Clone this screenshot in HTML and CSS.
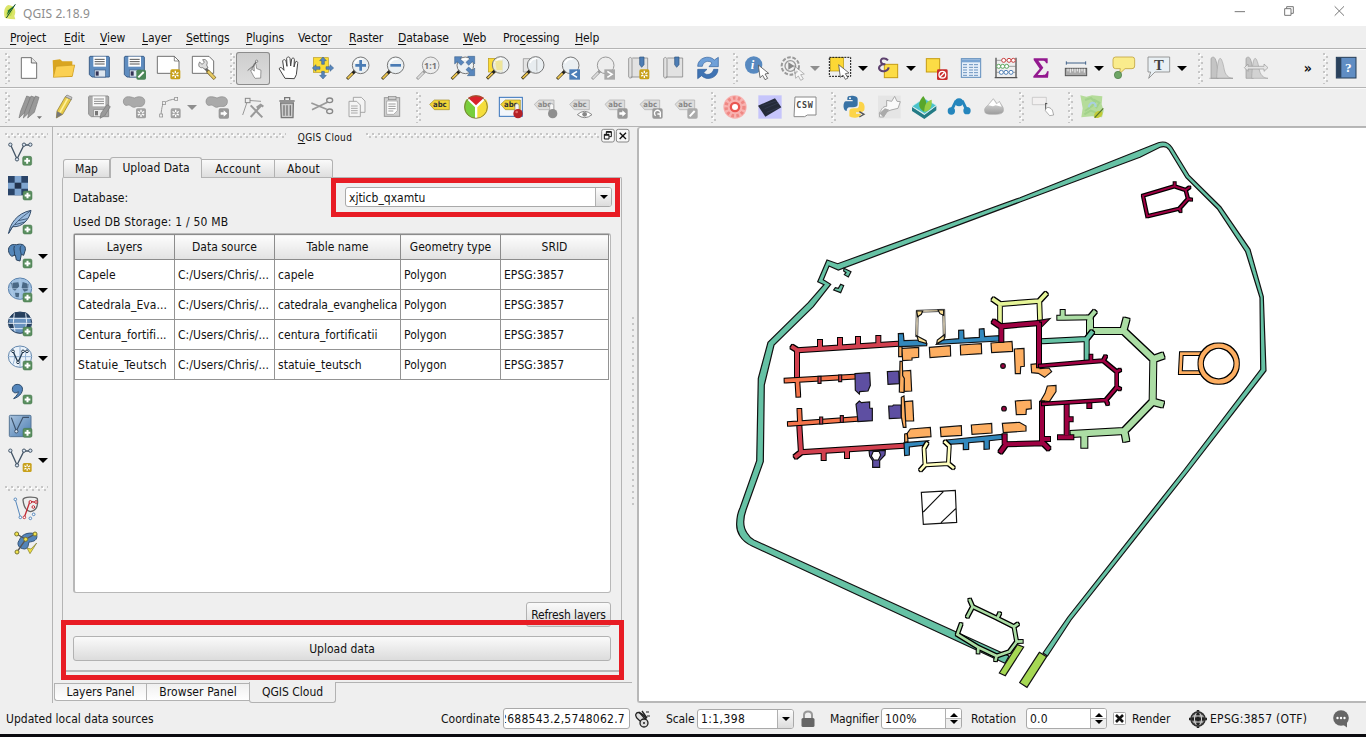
FILE: index.html
```html
<!DOCTYPE html>
<html lang="en">
<head>
<meta charset="utf-8">
<title>QGIS 2.18.9</title>
<link rel="stylesheet" href="styles.css">
</head>
<body>
<svg class="defs" width="0" height="0">
<defs>
<linearGradient id="gSteel" x1="0" y1="0" x2="1" y2="1"><stop offset="0" stop-color="#a9c3de"/><stop offset="1" stop-color="#4b7db2"/></linearGradient>
<linearGradient id="gGray" x1="0" y1="0" x2="0" y2="1"><stop offset="0" stop-color="#e8e8e8"/><stop offset="1" stop-color="#9c9c9c"/></linearGradient>
<g id="plus"><rect width="27" height="27" rx="5" fill="#5b8f60" stroke="#3f7347" stroke-width="1.5"/><path d="M13.500 5V22M5 13.500H22" stroke="#fff" stroke-width="6"/></g>
<g id="star"><rect width="30" height="30" rx="5" fill="#c8a11c"/><path d="M15 4V26M5.500 9.500L24.500 20.500M24.500 9.500L5.500 20.500" stroke="#fff" stroke-width="4"/><circle cx="15" cy="15" r="4" fill="#c8a11c"/></g>
<g id="starG"><rect width="30" height="30" rx="5" fill="#a2a2a2"/><path d="M15 4V26M5.500 9.500L24.500 20.500M24.500 9.500L5.500 20.500" stroke="#fff" stroke-width="4"/><circle cx="15" cy="15" r="4" fill="#a2a2a2"/></g>
<g id="arrowG"><rect width="31" height="31" rx="5" fill="#999"/><path d="M6 12H15V6L26 15.500L15 25V19H6Z" fill="#fff"/></g>
<g id="lens"><path d="M-16 16L-41 41" stroke="#4a4020" stroke-width="9"/><path d="M-22 22L-39 39" stroke="#f0c850" stroke-width="5"/><path d="M-16 16L-24 24" stroke="#222" stroke-width="8"/><circle r="25" fill="#e9eef2" fill-opacity=".85" stroke="#777" stroke-width="3"/><path d="M-17 -6A18 18 0 0 1 6 -18" fill="none" stroke="#fff" stroke-width="5"/></g>
<g id="lensG"><path d="M-16 16L-41 41" stroke="#999" stroke-width="9"/><path d="M-22 22L-39 39" stroke="#ddd" stroke-width="5"/><circle r="25" fill="#ececec" fill-opacity=".85" stroke="#999" stroke-width="3"/></g>
<g id="tag"><path d="M1 15L15 2H60V31H15Z" fill="#f0d437" stroke="#a08c28" stroke-width="2"/><text x="11" y="24" class="abc">abc</text></g>
<g id="tagG"><path d="M1 15L15 2H60V31H15Z" fill="#ddd" stroke="#aaa" stroke-width="2"/><text x="11" y="24" class="abc dim">abc</text></g>
<g id="disk"><path d="M2 0H58L60 3V62H8L0 55V2Z" fill="#5f8dc0" stroke="#3d5f8a" stroke-width="3"/><rect x="12" y="1" width="38" height="30" fill="#fff"/><path d="M16 9H46M16 16H46M16 23H46" stroke="#555" stroke-width="3"/><rect x="15" y="41" width="34" height="21" fill="#dde6ef" stroke="#3d5f8a" stroke-width="2"/><rect x="19" y="45" width="9" height="13" fill="#335"/></g>
<g id="cursor"><path d="M0 0L31 25L20 27L28 40L20 44L13 31L5 38Z" fill="#fff" stroke="#555" stroke-width="2.500"/></g>
<g id="vec"><path d="M8 8L27 50L48 8H66" fill="none" stroke="#456" stroke-width="4"/><g fill="#dbe6f2" stroke="#456" stroke-width="3"><circle cx="7" cy="7" r="5"/><circle cx="27" cy="51" r="5"/><circle cx="48" cy="7" r="5"/><circle cx="67" cy="7" r="5"/></g></g>
</defs>
</svg>

<header class="titlebar">
<svg class="logo" viewBox="9 9 42 51"><path d="M25 15C12 20 10 40 15 54L30 57L46 58L43 48C50 35 45 16 25 15Z" fill="#dce56a"/><path d="M20 46C17 34 22 26 36 22L38 35L33 48Z" fill="#c3de4d"/><path d="M47 13L20 46L25 31Z" fill="#126b39"/><path d="M46 13L19 54" stroke="#114d2b" stroke-width="3"/></svg>
<span class="apptitle">QGIS 2.18.9</span>
<svg class="winbtns" viewBox="636 0 414 78"><g fill="none" stroke="#777" stroke-width="3"><path d="M656 35H687M956 19L984 47M984 19L956 47"/><path d="M806 26H825V46H806ZM812 26V20H832V40H825"/></g></svg>
</header>
<nav class="menubar"><span><u>P</u>roject</span><span><u>E</u>dit</span><span><u>V</u>iew</span><span><u>L</u>ayer</span><span><u>S</u>ettings</span><span><u>P</u>lugins</span><span>Vect<u>o</u>r</span><span><u>R</u>aster</span><span><u>D</u>atabase</span><span><u>W</u>eb</span><span>Pro<u>c</u>essing</span><span><u>H</u>elp</span></nav>

<div class="toolbar">
<i class="grip g11"></i>
<svg class="t" viewBox="33 147 105 114"><path d="M64 173H94L110 189V235H64Z" fill="#fff" stroke="#555" stroke-width="2.500"/><path d="M94 173V189H110" fill="#e8e8e8" stroke="#555" stroke-width="2.500"/></svg>
<svg class="t" viewBox="138 147 105 114"><path d="M160 230L158 181L180 178L187 184H217V195L224 196L216 231Z" fill="#d9a520"/><path d="M160 232L168 199L224 195L217 229Z" fill="#fbd052" stroke="#c8991e" stroke-width="2"/></svg>
<svg class="t" viewBox="243 147 105 114"><use href="#disk" x="268" y="169"/></svg>
<svg class="t" viewBox="348 147 105 114"><use href="#disk" x="373" y="169"/><rect x="409" y="209" width="29" height="30" rx="5" fill="#4b8657"/><path d="M415 232L431 216" stroke="#fff" stroke-width="6"/></svg>
<svg class="t" viewBox="453 147 105 114"><path d="M472 169H523L537 183V220H472Z" fill="#fff" stroke="#555" stroke-width="2.500"/><path d="M523 169V183H537" fill="none" stroke="#555" stroke-width="2"/><use href="#star" x="511" y="208"/></svg>
<svg class="t" viewBox="558 147 105 114"><path d="M577 169H627L641 183V220H577Z" fill="#fff" stroke="#555" stroke-width="2.500"/><path d="M614 202L632 224" stroke="#666" stroke-width="8"/><path d="M622 212L645 236" stroke="#766225" stroke-width="11"/><path d="M624 214L644 235" stroke="#e7ca64" stroke-width="7"/><path d="M599 186L606 193L613 187L608 179C618 176 625 185 620 195L624 204L615 208L608 203C597 205 593 195 599 186Z" fill="#ddd" stroke="#555" stroke-width="2"/></svg>
<i class="grip g15"></i>
<svg class="t on" viewBox="708 147 105 114"><path d="M764 233L757 220L752 211L759 208L765 213L764 190C764 184 770 184 771 190L773 204L788 210L787 237L768 238Z" fill="#fff" stroke="#777" stroke-width="2.500"/><path d="M742 211L762 194L773 178M755 207L771 184" fill="none" stroke="#666" stroke-width="3"/><circle cx="773" cy="179" r="4" fill="#eee" stroke="#555" stroke-width="2"/></svg>
<svg class="t" viewBox="813 147 105 114"><path d="M855 235L838 207C838 200 845 201 852 211L848 183C850 177 856 178 858 183L861 199L860 175C862 169 869 170 870 175L872 198L875 177C878 172 884 174 883 180L882 201L886 186C889 182 895 185 893 191L889 224L883 236Z" fill="#fff" stroke="#444" stroke-width="3"/></svg>
<svg class="t" viewBox="918 147 105 114"><rect x="940" y="173" width="45" height="44" fill="#fbdc35" stroke="#b99a1d" stroke-width="2"/><g fill="#5786bd" stroke="#315681" stroke-width="1.500"><path d="M969 171L979 182H973V193H965V182H959ZM969 237L979 226H973V214H965V226H959ZM937 204L948 194V200H960V208H948V214ZM1001 204L990 194V200H978V208H990V214Z"/></g></svg>
<svg class="t" viewBox="3 147 105 114"><use href="#lens" x="62" y="196"/><path d="M62 180V212M46 196H78" stroke="#4a7cb5" stroke-width="8"/></svg>
<svg class="t" viewBox="108 147 105 114"><use href="#lens" x="167" y="196"/><path d="M151 196H183" stroke="#4a7cb5" stroke-width="8"/></svg>
<svg class="t" viewBox="213 147 105 114"><use href="#lensG" x="272" y="196"/><text x="252" y="206" class="one">1:1</text></svg>
<svg class="t" viewBox="318 147 105 114"><use href="#lens" x="376" y="196"/><g fill="#5786bd" stroke="#315681" stroke-width="1.500"><path d="M344 170H366L360 177L372 187L363 196L352 185L344 192ZM404 169V192L397 185L386 196L378 187L389 177L383 169ZM404 227V204L397 211L386 201L378 209L389 219L382 227Z"/></g></svg>
<svg class="t" viewBox="423 147 105 114"><rect x="445" y="175" width="42" height="41" fill="#fbdc35" stroke="#b99a1d" stroke-width="2"/><use href="#lens" x="482" y="195"/><path d="M465 182H487V210H470Z" fill="#efe48c" opacity=".8"/></svg>
<svg class="t" viewBox="528 147 105 114"><path d="M550 176H592V216H550Z" fill="#e4e4e4" stroke="#888" stroke-width="2"/><use href="#lens" x="587" y="195"/><path d="M590 177V212" stroke="#aaa" stroke-width="2"/></svg>
<svg class="t" viewBox="633 147 105 114"><use href="#lens" x="692" y="196"/><rect x="688" y="208" width="32" height="31" fill="#4d7eb8"/><path d="M711 214L697 223L711 232" fill="none" stroke="#fff" stroke-width="5"/></svg>
<svg class="t" viewBox="738 147 105 114"><use href="#lensG" x="797" y="196"/><rect x="793" y="208" width="32" height="31" fill="#aaa"/><path d="M802 214L816 223L802 232" fill="none" stroke="#fff" stroke-width="5"/></svg>
<svg class="t" viewBox="843 147 105 114"><path d="M866 176C870 169 877 173 876 180V232C872 236 865 234 866 228ZM877 174H923V231H872" fill="#e2e2e2" stroke="#8a8a8a" stroke-width="2.500"/><path d="M899 171H912V194L905 202L899 194Z" fill="#4d7db4" stroke="#2f547f" stroke-width="2"/><use href="#star" x="898" y="208"/></svg>
<svg class="t" viewBox="948 147 105 114"><path d="M971 176C975 169 982 173 981 180V232C977 236 970 234 971 228ZM982 174H1028V231H977" fill="#e2e2e2" stroke="#8a8a8a" stroke-width="2.500"/><path d="M1004 171H1017V194L1010 202L1004 194Z" fill="#4d7db4" stroke="#2f547f" stroke-width="2"/></svg>
<svg class="t" viewBox="33 12 105 114"><path d="M53 64C53 38 88 28 103 45L115 37V65H87L96 54C86 44 69 50 67 64Z" fill="#6fa0d8" stroke="#315f9c" stroke-width="2"/><path d="M114 73C114 99 80 109 65 92L53 101V73H81L71 83C81 94 98 87 101 73Z" fill="#3f73b3" stroke="#315f9c" stroke-width="2"/></svg>
<i class="grip g13"></i>
<svg class="t" viewBox="177 12 105 114"><circle cx="221" cy="60" r="26" fill="#5789c0"/><text x="212" y="73" class="info">i</text><use href="#cursor" x="235" y="60"/></svg>
<svg class="t" viewBox="282 12 105 114"><g fill="none" stroke="#999"><circle cx="331" cy="63" r="26" stroke-width="6" stroke-dasharray="11 5"/><circle cx="331" cy="63" r="16" stroke-width="4"/></g><path d="M325 52L343 63L325 74Z" fill="#888"/><use href="#cursor" x="342" y="62" opacity=".45"/></svg>
<i class="dd dim"></i>
<svg class="t" viewBox="426 12 105 114"><rect x="451" y="38" width="40" height="40" fill="#fcd835" stroke="#b39510" stroke-width="2"/><rect x="448" y="37" width="64" height="57" fill="none" stroke="#111" stroke-width="3" stroke-dasharray="6 3"/><use href="#cursor" x="476" y="59"/></svg>
<i class="dd"></i>
<svg class="t" viewBox="570 12 105 114"><rect x="613" y="58" width="40" height="40" fill="#fcdc45" stroke="#c69c13" stroke-width="3"/><path d="M624 46C616 36 599 40 603 51C604 57 612 58 616 58C600 57 593 68 600 75C608 83 625 78 626 67" fill="none" stroke="#5d416e" stroke-width="6"/></svg>
<i class="dd"></i>
<svg class="t" viewBox="714 12 105 114"><rect x="739" y="41" width="40" height="40" fill="#fcdc45" stroke="#c69c13" stroke-width="3"/><rect x="771" y="73" width="32" height="32" rx="4" fill="#c92c2c"/><circle cx="787" cy="89" r="10" fill="none" stroke="#fff" stroke-width="4"/><path d="M780 96L794 82" stroke="#fff" stroke-width="4"/></svg>
<svg class="t" viewBox="819 12 105 114"><rect x="844" y="41" width="58" height="56" fill="#e6eff9" stroke="#5f8cbc" stroke-width="3"/><rect x="846" y="43" width="54" height="9" fill="#79a4d2"/><path d="M849 59H862M849 67H862M849 75H862M849 83H862M849 91H862M867 59H897M867 67H897M867 75H897M867 83H897M867 91H897" stroke="#6b93bf" stroke-width="3" stroke-dasharray="12 3"/></svg>
<svg class="t" viewBox="924 12 105 114"><path d="M948 38V98M1008 38V98M944 98H1012" stroke="#555" stroke-width="4"/><path d="M948 46H1008M948 64H1008M948 82H1008" stroke="#777" stroke-width="2"/><g fill="#fff" stroke-width="3"><g stroke="#c94040"><circle cx="971" cy="46" r="6"/><circle cx="987" cy="46" r="6"/><circle cx="1000" cy="46" r="6"/></g><g stroke="#5ca65c"><circle cx="956" cy="64" r="6"/><circle cx="968" cy="64" r="6"/><circle cx="980" cy="64" r="6"/></g><g stroke="#4f81b9"><circle cx="964" cy="82" r="6"/><circle cx="978" cy="82" r="6"/><circle cx="993" cy="82" r="6"/></g></g></svg>
<svg class="t" viewBox="21 147 105 114"><path d="M53 175H95V190H90C89 183 85 182 78 182H67L82 203L65 225H80C89 225 91 222 93 214H98L96 233H52V229L71 206L53 180Z" fill="#93198f"/></svg>
<svg class="t" viewBox="126 147 105 114"><path d="M151 189H209M151 184V194M209 184V194" stroke="#3f6188" stroke-width="3"/><rect x="148" y="205" width="64" height="22" fill="#aaa" stroke="#555" stroke-width="3"/><path d="M156 206V214M163 206V218M170 206V214M177 206V218M184 206V214M191 206V218M198 206V214M205 206V218" stroke="#fff" stroke-width="2.500"/></svg>
<i class="dd"></i>
<svg class="t" viewBox="270 147 105 114"><path d="M299 171H349Q356 171 356 179V198Q356 206 348 206H327L310 222L313 206H299Q291 206 291 198V179Q291 171 299 171Z" fill="#faec8c" stroke="#c2a43e" stroke-width="2.500"/><circle cx="306" cy="225" r="11" fill="#6ea565" stroke="#4a7846" stroke-width="2"/></svg>
<svg class="t" viewBox="375 147 105 114"><path d="M396 171H461V216H417L398 235L404 216H396Z" fill="#e9f0f4" stroke="#888" stroke-width="2.500"/><text x="414" y="209" class="serifT">T</text></svg>
<i class="dd"></i>
<i class="grip g15"></i>
<svg class="t" viewBox="564 147 105 114"><path d="M585 235V175C598 162 604 185 607 235Z" fill="#c4c4c4" stroke="#999" stroke-width="2"/><path d="M602 235C605 160 616 160 625 210C630 231 642 234 651 235Z" fill="#d2d2d2" stroke="#a5a5a5" stroke-width="2"/><path d="M580 235H651" stroke="#999" stroke-width="2"/></svg>
<svg class="t" viewBox="669 147 105 114"><path d="M690 235V175C703 162 709 185 712 235Z" fill="#c4c4c4" stroke="#999" stroke-width="2"/><path d="M707 235C710 160 721 160 730 210C735 231 747 234 756 235Z" fill="#d2d2d2" stroke="#a5a5a5" stroke-width="2"/><path d="M685 203L696 192V199H744V192L756 203L744 214V207H696V214Z" fill="#e4e4e4" stroke="#999" stroke-width="2"/></svg>
<span class="more">»</span>
<i class="grip g17"></i>
<svg class="t" viewBox="939 147 105 114"><rect x="961" y="172" width="59" height="62" fill="#608dc3" stroke="#263c55" stroke-width="3"/><rect x="962" y="173" width="14" height="60" fill="#2a415b"/><text x="987" y="217" class="q">?</text></svg>
</div>

<div class="toolbar">
<i class="grip g11"></i>
<svg class="t" viewBox="33 264 105 114"><g fill="#999" stroke="#777" stroke-width="2"><path d="M57 354L62 333L80 288L91 292L77 335Z"/><path d="M70 354L75 333L93 288L104 292L90 335Z"/><path d="M83 354L88 333L106 288L117 292L103 337Z"/></g><path d="M111 349H126L118 357Z" fill="#777"/></svg>
<svg class="t" viewBox="138 264 105 114"><path d="M169 354L171 333L196 290L214 298L188 343Z" fill="#e8cb47" stroke="#86712a" stroke-width="2"/><path d="M180 337L203 296" stroke="#fff09a" stroke-width="5"/><path d="M196 290L201 285L216 292L214 299Z" fill="#c8c8c8" stroke="#777" stroke-width="2"/><path d="M169 354L171 334L188 343Z" fill="#777"/></svg>
<svg class="t" viewBox="243 264 105 114"><g class="mono"><use href="#disk" x="266" y="288"/></g><path d="M300 355L303 340L321 314L331 320L314 347Z" fill="#999" stroke="#777" stroke-width="2"/></svg>
<svg class="t" viewBox="348 264 105 114"><path d="M370 306C370 287 387 288 403 294C424 284 439 295 433 311C427 325 414 316 406 321C396 326 392 312 382 316C375 318 371 312 370 306Z" fill="#aaa" stroke="#8a8a8a" stroke-width="2"/><use href="#starG" x="408" y="325"/></svg>
<svg class="t" viewBox="453 264 105 114"><path d="M483 345C485 320 489 308 493 309C500 302 514 298 528 297" fill="none" stroke="#999" stroke-width="3"/><g fill="#eee" stroke="#888" stroke-width="2"><rect x="479" y="342" width="9" height="9"/><rect x="487" y="305" width="9" height="9"/><rect x="524" y="292" width="9" height="9"/></g><use href="#starG" x="512" y="325"/></svg>
<i class="dd dim"></i>
<svg class="t" viewBox="597 264 105 114"><path d="M618 306C618 287 635 288 651 294C672 284 687 295 681 311C675 325 662 316 654 321C644 326 640 312 630 316C623 318 619 312 618 306Z" fill="#aaa" stroke="#8a8a8a" stroke-width="2"/><use href="#arrowG" x="656" y="325"/></svg>
<svg class="t" viewBox="702 264 105 114"><path d="M728 345L743 301L783 304" fill="none" stroke="#999" stroke-width="3"/><rect x="736" y="295" width="14" height="13" fill="#eee" stroke="#888" stroke-width="3"/><path d="M752 316L787 352M785 315L752 351M770 323L782 314L790 320" fill="none" stroke="#999" stroke-width="6"/></svg>
<svg class="t" viewBox="807 264 105 114"><path d="M842 309H880L879 353H844Z" fill="#ccc" stroke="#777" stroke-width="4"/><path d="M852 316V347M861 316V347M871 316V347M838 303H884M854 300V293H869V300" fill="none" stroke="#777" stroke-width="4"/></svg>
<svg class="t" viewBox="912 264 105 114"><path d="M934 309L980 328M936 329L982 307" stroke="#999" stroke-width="5"/><g fill="none" stroke="#888" stroke-width="4"><ellipse cx="989" cy="301" rx="9" ry="7"/><ellipse cx="989" cy="334" rx="9" ry="7"/></g></svg>
<svg class="t" viewBox="-3 264 105 114"><g fill="#f4f4f4" stroke="#999" stroke-width="2.500"><path d="M40 292H64L75 303V337H40Z"/><path d="M27 304H50L61 315V350H27Z"/></g><path d="M33 318H53M33 325H53M33 332H53M33 339H53" stroke="#aaa" stroke-width="3"/></svg>
<svg class="t" viewBox="102 264 105 114"><rect x="133" y="293" width="46" height="56" fill="#d0d0d0" stroke="#999" stroke-width="3"/><path d="M140 303H172V332L161 343H140Z" fill="#fff" stroke="#999" stroke-width="2"/><rect x="145" y="289" width="23" height="10" fill="#ccc" stroke="#888" stroke-width="2"/><path d="M145 312H167M145 319H167M145 326H167M145 333H160" stroke="#999" stroke-width="3"/></svg>
<i class="grip g13"></i>
<svg class="t" viewBox="246 264 105 114"><use href="#tag" x="268" y="298"/></svg>
<svg class="t" viewBox="351 264 105 114"><circle cx="408" cy="321" r="35" fill="#fff"/><path d="M408 316L384 293Q408 279 432 293Z" fill="#d9232a"/><path d="M405 322L380 297C363 321 375 352 405 355Z" fill="#79ce3c"/><path d="M412 322L437 297C454 321 440 352 412 355Z" fill="#f5de3b"/><circle cx="408" cy="321" r="34" fill="none" stroke="#7c7034" stroke-width="2.500"/></svg>
<svg class="t" viewBox="456 264 105 114"><rect x="478" y="292" width="69" height="57" fill="#f2f6fb" stroke="#3674bb" stroke-width="3"/><use href="#tag" x="481" y="298"/><rect x="525" y="311" width="12" height="25" rx="6" fill="#f7f7f7" stroke="#888" stroke-width="2"/><circle cx="534" cy="341" r="14" fill="#b52026"/><circle cx="530" cy="336" r="4" fill="#dc6969"/></svg>
<svg class="t" viewBox="561 264 105 114"><use href="#tagG" x="582" y="298"/><rect x="629" y="311" width="12" height="25" rx="6" fill="#f7f7f7" stroke="#999" stroke-width="2"/><circle cx="638" cy="341" r="14" fill="#8e8e8e"/></svg>
<svg class="t" viewBox="666 264 105 114"><use href="#tagG" x="688" y="298"/><path d="M712 344Q733 324 756 344Q734 362 712 344Z" fill="#fff" stroke="#888" stroke-width="3"/><circle cx="734" cy="343" r="7" fill="#888"/></svg>
<svg class="t" viewBox="771 264 105 114"><use href="#tagG" x="794" y="298"/><use href="#arrowG" x="832" y="325"/></svg>
<svg class="t" viewBox="876 264 105 114"><use href="#tagG" x="899" y="298"/><rect x="937" y="325" width="31" height="31" rx="5" fill="#999"/><path d="M947 347A9 9 0 1 1 959 346M961 352V342H952" fill="none" stroke="#fff" stroke-width="4"/></svg>
<svg class="t" viewBox="981 264 105 114"><use href="#tagG" x="1004" y="298"/><rect x="1042" y="325" width="31" height="31" rx="5" fill="#aaa"/><path d="M1049 349L1064 333" stroke="#fff" stroke-width="6"/></svg>
<i class="grip g15"></i>
<svg class="t" viewBox="111 129 105 114"><circle cx="165" cy="186" r="35" fill="#f8b2b0"/><circle cx="165" cy="186" r="27" fill="none" stroke="#ef8884" stroke-width="10" stroke-dasharray="8 7"/><circle cx="165" cy="186" r="16" fill="#ea5550"/><circle cx="165" cy="186" r="9" fill="#fff"/></svg>
<svg class="t" viewBox="216 129 105 114"><rect x="235" y="151" width="70" height="70" fill="#c6c5fb"/><path d="M234 182L285 160L304 187L256 215Z" fill="#252b39"/><path d="M247 182L289 168M254 191L295 174M260 202L298 187" stroke="#364056" stroke-width="2"/></svg>
<svg class="t" viewBox="321 129 105 114"><path d="M345 156H408V210H382L374 215H342Z" fill="#fff" stroke="#888" stroke-width="3"/><text x="349" y="190" class="csw">CSW</text></svg>
<i class="grip g15"></i>
<svg class="t" viewBox="471 129 105 114"><path d="M505 154C516 150 533 153 533 162V178C533 185 528 187 519 187H509C502 187 500 193 500 198C488 199 488 171 497 169H518V165H502C502 159 502 156 505 154Z" fill="#3872a5"/><circle cx="510" cy="160" r="3" fill="#fff"/><path d="M537 171C551 168 556 181 553 195C550 202 540 202 528 202V206H543C542 220 516 221 508 214V198C508 192 515 190 522 190H529C537 190 538 182 537 171Z" fill="#fcd449"/><path d="M538 200L552 208L538 216" fill="none" stroke="#555" stroke-width="4"/></svg>
<svg class="t" viewBox="576 129 105 114"><rect x="594" y="152" width="68" height="68" fill="#e5e5e5"/><path d="M598 204C605 194 607 184 620 184L620 166L635 169L644 154L651 169L661 170L654 190L633 195L620 200L611 216H599Z" fill="#fafafa" stroke="#aaa" stroke-width="3"/><path d="M598 205L615 190L628 194L610 217Z" fill="#aaa"/></svg>
<svg class="t" viewBox="681 129 105 114"><path d="M696 186L733 210L769 183V196L733 222L696 198Z" fill="#237b85"/><path d="M696 184L732 160L769 181L734 207Z" fill="#4ac2cb" stroke="#d9f3f4" stroke-width="2"/><path d="M732 200C710 187 716 169 730 153C741 168 742 185 732 200Z" fill="#58a62b"/><path d="M733 201C732 175 743 168 755 164C757 187 749 198 733 201Z" fill="#97cd45"/></svg>
<svg class="t" viewBox="786 129 105 114"><path d="M814 197L827 170H848L861 197" fill="none" stroke="#2586bd" stroke-width="9"/><g fill="#2586bd"><circle cx="814" cy="198" r="11"/><circle cx="837" cy="172" r="12"/><circle cx="861" cy="197" r="11"/></g></svg>
<svg class="t" viewBox="891 129 105 114"><path d="M915 201C911 190 918 186 925 179L940 161L951 176L958 169L969 187C974 205 965 208 940 208C920 208 915 205 915 201Z" fill="url(#gGray)" stroke="#aaa" stroke-width="2"/><path d="M925 181L940 164L949 178L958 172L965 185L947 181L939 184Z" fill="#fff"/></svg>
<i class="grip g13"></i>
<svg class="t" viewBox="27 264 105 114"><path d="M49 292H91V314H49Z" fill="#f2f0f0" stroke="#bbb" stroke-width="2"/><path d="M89 309V330M88 310L94 311" stroke="#555" stroke-width="3"/><path d="M88 332C89 320 100 319 109 330L113 345L101 347Z" fill="#fff" stroke="#888" stroke-width="2"/></svg>
<i class="grip g14"></i>
<svg class="t" viewBox="174 264 105 114"><path d="M193 286L211 290L228 286L259 289L257 313L263 332L258 352L228 349L196 352L200 325Z" fill="#b5dc9a"/><path d="M207 300L225 294L237 306L228 318L207 333M232 298L250 308L240 325M205 343L224 332L240 338" stroke="#a2d28b" stroke-width="6" fill="none"/><path d="M218 322C222 304 240 304 239 321" fill="none" stroke="#a9cfe0" stroke-width="6"/><path d="M235 353C231 336 246 329 259 335C261 350 249 356 235 353Z" fill="#c3cb38"/><path d="M236 353L262 325" stroke="#55772b" stroke-width="4"/></svg>
</div>

<main class="work">
<aside class="sidebar">
<i class="hgrip"></i>
<div class="tool"><svg class="v" viewBox="9 39 105 102"><use href="#vec" x="24" y="55"/><use href="#plus" x="68" y="97"/></svg></div>
<div class="tool"><svg class="v" viewBox="9 141 105 102"><rect x="24" y="156" width="60" height="58" fill="#2a4468"/><path d="M44 156h20v20h20v18h-20v20h-20v-20h-20v-18h20z" fill="#7fa5d0"/><rect x="44" y="176" width="20" height="18" fill="#22334e"/><use href="#plus" x="69" y="201"/></svg></div>
<div class="tool"><svg class="v" viewBox="9 243 105 102"><path d="M26 328C30 300 50 268 93 259C89 286 66 311 38 308Z" fill="#9bbce0" stroke="#354e6c" stroke-width="3"/><path d="M25 329C40 300 60 284 91 261M45 302L75 294M55 290L82 284" fill="none" stroke="#354e6c" stroke-width="2.500"/><use href="#plus" x="69" y="303"/></svg></div>
<div class="tool"><svg class="v" viewBox="9 345 105 102"><path d="M31 365C38 358 48 365 54 361C65 359 78 363 76 378L71 394L64 391L60 411L49 408L46 393L35 397C23 387 23 372 31 365Z" fill="#5486b9" stroke="#29425e" stroke-width="3"/><path d="M43 366C39 378 46 385 43 394M64 365C56 372 64 386 63 391" fill="none" stroke="#29425e" stroke-width="3"/><use href="#plus" x="69" y="405"/></svg><i class="dd"></i></div>
<div class="tool"><svg class="v" viewBox="9 447 105 102"><ellipse cx="60" cy="494" rx="35" ry="32" fill="#9fc0e1" stroke="#5b82ac" stroke-width="3"/><path d="M33 477L55 475L58 487L45 500L36 494ZM68 474L86 480L85 499L73 503L65 491ZM45 506L58 507L56 520L47 519Z" fill="#4a6885"/><path d="M25 494H95M60 463V526M40 468Q30 494 40 520M80 468Q90 494 80 520" fill="none" stroke="#b5cfe8" stroke-width="2"/><use href="#plus" x="69" y="507"/></svg><i class="dd"></i></div>
<div class="tool"><svg class="v" viewBox="9 549 105 102"><ellipse cx="60" cy="596" rx="35" ry="32" fill="#6992bf" stroke="#263f5d" stroke-width="3"/><path d="M30 581Q36 569 45 565H76Q88 570 91 581ZM25 596H43V613H31ZM78 596H95L89 613H78Z" fill="#263f5d"/><path d="M26 583H94M25 598H95M31 614H90M43 568Q36 595 45 622M77 568Q84 595 75 622" fill="none" stroke="#e3edf8" stroke-width="3"/><use href="#plus" x="69" y="609"/></svg></div>
<div class="tool"><svg class="v" viewBox="9 651 105 102"><ellipse cx="60" cy="698" rx="35" ry="32" fill="#eaf2fa" stroke="#6387ad" stroke-width="3"/><path d="M25 698H95M60 667V730M38 675Q49 696 39 721M82 675Q71 696 81 721" fill="none" stroke="#94b2d3" stroke-width="3"/><path d="M39 682L54 715L69 682H81" fill="none" stroke="#243b50" stroke-width="4"/><g fill="#fff" stroke="#243b50" stroke-width="3"><circle cx="39" cy="682" r="4"/><circle cx="54" cy="715" r="4"/><circle cx="69" cy="682" r="4"/><circle cx="81" cy="682" r="4"/></g><use href="#plus" x="69" y="711"/></svg><i class="dd"></i></div>
<div class="tool"><svg class="v" viewBox="9 -42 105 102"><path d="M37 2C36 -14 55 -19 65 -8C73 5 61 23 41 29C49 20 55 15 55 8C46 15 38 11 37 2Z" fill="#5486bc" stroke="#2d4b6c" stroke-width="3"/><use href="#plus" x="69" y="18"/></svg></div>
<div class="tool"><svg class="v" viewBox="9 60 105 102"><rect x="28" y="79" width="65" height="64" rx="3" fill="url(#gSteel)" stroke="#567595" stroke-width="3"/><path d="M34 86L49 126L69 85H87" fill="none" stroke="#3d526b" stroke-width="3.500"/><circle cx="49" cy="127" r="5" fill="#dce8f3" stroke="#3d526b" stroke-width="3"/><use href="#plus" x="69" y="118"/></svg></div>
<div class="tool"><svg class="v" viewBox="9 162 105 102"><use href="#vec" x="24" y="178"/><g transform="translate(68 222) scale(.9)"><use href="#star"/></g></svg><i class="dd"></i></div>
<i class="hgrip second"></i>
<div class="tool shifted"><svg class="v" viewBox="27 303 105 102"><path d="M46 329L61 381" stroke="#5587bc" stroke-width="3"/><path d="M69 330C68 318 108 320 112 326C115 348 110 362 91 365C77 362 71 350 69 330Z" fill="#eee" stroke="#666" stroke-width="4"/><path d="M73 382L90 334L107 337" fill="none" stroke="#c22d38" stroke-width="4"/><g fill="#fff" stroke="#c22d38" stroke-width="3"><circle cx="73" cy="382" r="4"/><circle cx="91" cy="336" r="4"/><circle cx="100" cy="351" r="4"/><circle cx="108" cy="336" r="4"/></g><g fill="#fff" stroke="#5587bc" stroke-width="3"><circle cx="46" cy="328" r="4"/><circle cx="61" cy="382" r="4"/><circle cx="91" cy="385" r="4"/><circle cx="101" cy="373" r="4"/></g></svg></div>
<div class="tool shifted"><svg class="v" viewBox="27 405 105 102"><path d="M57 452C67 427 93 426 110 433C114 451 101 455 87 456C84 464 87 474 74 477C57 476 49 463 57 452Z" fill="#5384b9" stroke="#35557a" stroke-width="3"/><path d="M50 432L77 448L105 432M77 448L51 486" fill="none" stroke="#555" stroke-width="4"/><g fill="#f1e24c" stroke="#777534" stroke-width="3"><circle cx="50" cy="432" r="6"/><circle cx="105" cy="432" r="6"/><circle cx="77" cy="448" r="6"/><circle cx="51" cy="486" r="6"/></g><path d="M81 474L93 477L110 459L90 491Z" fill="#f4e23d" stroke="#777534" stroke-width="2"/></svg></div>
</aside>

<section class="dock">
<div class="docktitle"><i class="hgrip wide1"></i><span><u>Q</u>GIS Cloud</span><i class="hgrip wide2"></i>
<svg class="dockbtns" viewBox="843 10 87 45"><g fill="#f8f8f8" stroke="#888" stroke-width="3"><rect x="845" y="14" width="38" height="38" rx="6"/><rect x="889" y="14" width="38" height="38" rx="6"/></g><path d="M859 28V21H874V36H868M853 29H867V43H853Z" fill="none" stroke="#111" stroke-width="3"/><path d="M859 22H874M853 31H867M899 24L918 43M918 24L899 43" stroke="#111" stroke-width="4"/></svg></div>
<div class="tabs"><span class="tab map-t">Map</span><span class="tab active">Upload Data</span><span class="tab acc-t">Account</span><span class="tab about-t">About</span></div>
<div class="page">
<div class="dbrow"><span>Database:</span><div class="combo db"><span>xjticb_qxamtu</span><b><i class="dd"></i></b></div></div>
<div class="storage">Used DB Storage: 1 / 50 MB</div>
<div class="tableframe"><table>
<colgroup><col class="c1"><col class="c1"><col class="c3"><col class="c1"><col class="c5"></colgroup>
<tr><th>Layers</th><th>Data source</th><th>Table name</th><th>Geometry type</th><th>SRID</th></tr>
<tr><td>Capele</td><td>C:/Users/Chris/...</td><td>capele</td><td>Polygon</td><td>EPSG:3857</td></tr>
<tr><td>Catedrala_Eva...</td><td>C:/Users/Chris/...</td><td class="tight">catedrala_evanghelica</td><td>Polygon</td><td>EPSG:3857</td></tr>
<tr><td>Centura_fortifi...</td><td>C:/Users/Chris/...</td><td>centura_fortificatii</td><td>Polygon</td><td>EPSG:3857</td></tr>
<tr><td class="loose">Statuie_Teutsch</td><td>C:/Users/Chris/...</td><td>statuie_teutsch</td><td>Polygon</td><td>EPSG:3857</td></tr>
</table></div>
<button class="btn refresh">Refresh layers</button>
<button class="btn upload">Upload data</button>
</div>
<div class="btabs"><span class="bt one-t">Layers Panel</span><span class="bt two-t">Browser Panel</span><span class="bt cur">QGIS Cloud</span><i class="rule"></i></div>
<div class="mark mark-db"></div>
<div class="mark mark-up"></div>
</section>
<div class="splitter"><i class="vgrip"></i></div>

<section class="canvas">
<svg class="plan" viewBox="639 129 727 572">
<defs>
<filter id="outline" x="-25%" y="-25%" width="150%" height="150%" color-interpolation-filters="sRGB"><feMorphology in="SourceAlpha" operator="dilate" radius="3" result="d"/><feMerge><feMergeNode in="d"/><feMergeNode in="SourceGraphic"/></feMerge></filter>
<path id="red" d="M184 649L203 661L505 641M201 661V745M270 655V630M330 650V624M384 648V621M445 643V618M194 982L213 967L522 947M213 967L208 888M281 965V990M351 960V984"/>
<path id="ora" d="M164 752L375 740M202 750L205 800M174 882L382 867M210 880L208 837"/>
<path id="cr1" d="M560 618L562 544L641 541L643 620"/>
<path id="cr2" d="M592 938L582 955L585 1005L570 1022M585 1005L655 1001L672 1015M655 1001L658 948L643 934"/>
<path id="yg" d="M37 506L60 522L178 513L200 489M60 522V580M178 513L180 570"/>
<path id="mar" d="M38 573L62 589L178 579M64 588V635M177 578V712M260 820V915M192 927H210M234 922H280M74 913V942M60 968L78 943L190 940L208 958M186 815V940M258 868H278M328 815V834"/>
<path id="apse" d="M177 708L370 692L378 677M370 692L410 725L422 719M410 725V772L422 778M410 772L378 810L384 824M378 810L186 822M333 697V674"/>
<path id="tl" d="M186 634L320 627L338 604M320 626V692"/>
<path id="gr" d="M340 603L430 602L440 565M430 602L520 687L551 676M520 687L518 815L550 824M518 815L433 903L439 934M433 903L272 912M313 908V953M330 557V612"/>
<path id="gr2" d="M232 563H250L330 562L346 543M248 540V565"/>
<path id="box" d="M664 671H604L601 728H664"/>
<path id="cap" d="M489 197L583 169L617 180L624 207L598 236L502 259ZM584 170V157M617 180L630 171M624 207L636 209M598 236L603 245"/>
<path id="cap2" d="M711 532L728 500L718 477M728 500L802 535L810 518M802 535L852 560L865 551M852 560L860 605L878 604M860 605L838 635L800 648L796 663M800 648L745 622L744 640M745 622L682 583L694 550"/>
</defs>
<path class="teal" d="M1005 663.300L752 546C741 541 736 532 736.700 523Q737 514 740 508L756.700 460.700L758.300 378.300L768 342.300L808.300 302.700L824 284.700L817.700 281.700L827 260L837.700 263.700L1020 197.700L1158.300 142.700Q1167 140 1172 147.500L1189.300 175.700L1220.700 206.700L1250 249.300L1263.300 296.700L1266 370.700L1189.300 470L1071 620L1047.500 656L1043 653L1068 617L1184 470L1260.700 369.300L1260 297.700L1245.700 251.700L1217.300 208.700L1186 177.700L1168.700 149.300Q1166 145.500 1160 147.300L1140 157.300L1020 202L838.300 270L829 266L823.300 279.700L830.700 284.300L813.300 306.700L774 345L764.300 385L763.300 461.700L746 510Q741 524 747 533Q750 538 754 540L1009 656Z"/>
<g transform="translate(730 130) scale(.33333)">
<path class="teal s3" d="M342 415L363 425L355 441L343 434L348 428L341 423ZM332 463L341 467L332 488L311 480L316 473L325 475Z"/>
<use href="#red" class="core red w11"/>
<use href="#ora" class="core ora w10"/>
<path class="redf s3" d="M264 739H273V760H264ZM326 735H335V755H326ZM269 861H278V882H269ZM331 857H340V877H331Z"/>
<path class="purple s3" d="M375 731L419 728L421 766L414 783L389 785L388 792L376 781ZM388 813L394 818L419 816V834L427 835V872L384 875L378 823ZM472 725L506 723L508 761L474 763ZM476 828H488L490 825H513L514 864L478 866ZM417 962H466L465 975L449 992V1012H428V992L419 978Z"/>
<path class="white s3" d="M430 964H447L452 975L445 990H432L424 978Z"/>
<path class="blue s3" d="M505 611L520 610L522 632L575 630L590 640V647L506 650ZM638 630L686 626V601L701 600L702 625L748 622V597L762 596L764 620L808 617V633L620 643ZM522 938L595 932L578 946L538 951V975L524 977ZM650 930L816 913L817 928L778 932V957L762 958V934L716 938V958L700 959V940L655 943Z"/>
<path class="orange s3" d="M516 655L566 652V682L546 684V690L518 692ZM506 650H516V680H506ZM598 652L661 647L662 678L600 683ZM691 645L754 641L755 671L692 675ZM783 639L846 634L848 664L785 668ZM518 723L542 721L545 783L523 784V745L518 737ZM510 694H517L518 737L523 745L522 788L508 786ZM524 815L548 813L551 873H527ZM514 802L522 798L528 892H520L514 860ZM541 897L601 892L603 920L534 925L531 911ZM631 892L694 887L695 916L633 920ZM724 885L785 880L786 909L726 913ZM524 912L532 910L534 935L524 938Z"/>
<use href="#cr1" class="core cream w2"/>
<path class="cream2 s3" d="M560 543H578L574 553L563 560ZM624 540H641V556L630 551ZM560 617L588 632L590 641L566 634ZM643 614V628L620 641L622 630Z"/>
<use href="#cr2" class="core pale w8"/>
</g>
<g transform="translate(980 130) scale(.33333)">
<use href="#gr" class="core green w17"/>
<use href="#gr2" class="core green w11"/><path class="greenf" d="M322 560H338V575H322Z"/>
<use href="#yg" class="core yg w10"/>
<use href="#tl" class="core tealc w11"/>
<path class="orange s3" d="M103 657L132 655L133 709L122 710L121 731H106ZM153 703L180 700V716L207 714L215 725L194 742L175 730L155 728ZM202 768L228 766V785L208 815L182 812L195 790ZM106 813L153 810L154 836L139 838L138 853L109 854ZM67 880L118 877L138 888V903L70 908Z"/>
<path d="M172 572L210 566L184 592Z" class="marf s3"/>
<use href="#mar" class="core mar w11"/><use href="#apse" class="core mar w8"/>
<circle cx="69" cy="708" r="7" class="marf s3"/><circle cx="72" cy="836" r="7" class="marf s3"/>
<use href="#box" class="core orangec w8"/>
<circle cx="716" cy="701" r="54" class="core orangec w13"/>
<use href="#cap" class="core mar w7"/>
</g>
<g transform="translate(730 440) scale(.33333)">
<path class="white s3" d="M574 157L676 151L680 247L580 253ZM580 216L640 155M633 248L678 205"/>
<use href="#cap2" class="core green w8"/>
<path class="lime s3" d="M862 614L881 621L826 707L808 699ZM928 637L950 650L891 742L869 728Z"/>
</g>
</svg>
</section>
</main>

<footer class="status">
<span class="msg">Updated local data sources</span>
<span class="coord">Coordinate</span><div class="field xy"><span>2688543.2,5748062.7</span></div>
<svg class="mouse" viewBox="0 0 18 18"><g fill="#ddd" stroke="#222" stroke-width="1.300"><path d="M2 4C0 8 6 10 7 12L12 8C10 5 4 0 2 4Z"/><path d="M5 2L12 10M8 1L13 8"/><circle cx="10" cy="13" r="4"/></g><circle cx="10" cy="13" r="1" fill="#222"/><path d="M12 2H15M13 6H16" stroke="#222"/></svg>
<span class="scale-l">Scale</span><div class="combo scale"><span>1:1,398</span><b><i class="dd"></i></b></div>
<svg class="lock" viewBox="0 0 16 18"><path d="M4 9V5Q4 1.500 8 1.500T12 5V9" fill="none" stroke="#999" stroke-width="2"/><rect x="1.500" y="8" width="13" height="9" rx="1.500" fill="#666"/></svg>
<span class="mag-l">Magnifier</span><div class="field spin"><span>100%</span><b><i class="up"></i><i class="down"></i></b></div>
<span class="rot-l">Rotation</span><div class="field spin rot"><span>0.0</span><b><i class="up"></i><i class="down"></i></b></div>
<svg class="check" viewBox="0 0 13 13"><rect x=".5" y=".5" width="12" height="12" rx="1" fill="#fff" stroke="#aaa"/><path d="M3 3L10 10M10 3L3 10" stroke="#111" stroke-width="2.600"/></svg>
<span class="render">Render</span>
<svg class="globe" viewBox="0 0 18 18"><circle cx="9" cy="9" r="7.500" fill="#555"/><path d="M9 0V18M0 9H18" stroke="#222" stroke-width="2.500"/><ellipse cx="9" cy="9" rx="3.500" ry="7" fill="none" stroke="#ddd"/><path d="M3 6H15M3 12H15" stroke="#ddd"/><circle cx="9" cy="9" r="7" fill="none" stroke="#333" stroke-width="1.500"/></svg>
<span class="crs">EPSG:3857 (OTF)</span>
<svg class="bubble" viewBox="0 0 18 18"><circle cx="9" cy="8" r="7.800" fill="#666"/><path d="M10 14L15 17.500L15 11Z" fill="#666"/><g fill="#fff"><circle cx="5.500" cy="8" r="1.200"/><circle cx="9" cy="8" r="1.200"/><circle cx="12.500" cy="8" r="1.200"/></g></svg>
</footer>
</body>
</html>
```

FILE: styles.css
```css
* { box-sizing: border-box; }
body {
  margin: 0; width: 1366px; height: 737px; overflow: hidden;
  display: flex; flex-direction: column;
  background: #efefef; color: #111;
  font: 12px/16px "DejaVu Sans Condensed", "DejaVu Sans", "Noto Sans", sans-serif;
  font-stretch: condensed;
  letter-spacing: 0; white-space: nowrap;
}
.defs { position: absolute; }
svg { display: block; flex: none; }
u { text-underline-offset: 2px; }

.titlebar { height: 26px; flex: none; background: #fff; display: flex; align-items: flex-start; }
.logo { width: 14px; height: 17px; margin: 3px 6px 0 3px; }
.apptitle { color: #8d8d8d; font: 12px/27px "Noto Sans", sans-serif; letter-spacing: .1px; }
.winbtns { width: 138px; height: 26px; margin-left: auto; }
.menubar {
  height: 22px; flex: none; padding-left: 10px; line-height: 24px; letter-spacing: -.1px;
  display: grid; grid-template-columns: 54px 36px 42px 44px 60px 52px 51px 49px 65px 40px 72px 40px;
}

.toolbar { height: 39px; flex: none; display: flex; align-items: center; border-top: 1px solid #b4b4b4; box-shadow: inset 0 1px #fafafa; }
.t { width: 35px; height: 38px; }
.t.on { background: linear-gradient(#cdcdcd, #dedede); border-radius: 3px; box-shadow: inset 0 0 0 1px #8c8c8c; height: 33px; width: 34px; margin-right: 1px; }
.grip { flex: none; height: 31px; display: flex; justify-content: flex-end; }
.grip::after {
  content: ""; width: 6px;
  background:
    radial-gradient(circle at 1px 1px, #c6c6c6 1px, transparent 1.300px) 0 0 / 6px 6px,
    radial-gradient(circle at 4px 4px, #c6c6c6 1px, transparent 1.300px) 0 0 / 6px 6px,
    radial-gradient(circle at 2px 2px, #fff 1px, transparent 1.300px) 0 0 / 6px 6px;
}
.g11 { width: 11px; }
.g13 { width: 13px; }
.g14 { width: 14px; }
.g15 { width: 15px; }
.g17 { width: 17px; }
.dd { flex: none; width: 13px; display: flex; justify-content: center; }
.dd::after { content: ""; border: 5px solid transparent; border-top-color: #000; border-bottom: 0; }
.toolbar .dd { justify-content: flex-start; padding-left: 1px; }
.dd.dim::after { border-top-color: #8e8e8e; }
.more { width: 38px; text-align: right; font-weight: bold; font-size: 14px; line-height: 30px; }

.abc { font: bold 23px "DejaVu Sans Condensed", "DejaVu Sans", sans-serif; fill: #333; letter-spacing: 0; }
.abc.dim { fill: #888; }
.one { font: bold 27px "Noto Sans", sans-serif; fill: #777; letter-spacing: 0; }
.info { font: italic bold 38px "Liberation Serif", serif; fill: #fff; }
.serifT { font: bold 44px "Liberation Serif", serif; fill: #444; }
.q { font: bold 40px "Liberation Serif", serif; fill: #fff; }
.csw { font: bold 25px "DejaVu Sans Mono", monospace; fill: #444; letter-spacing: 2px; }
.mono { filter: grayscale(1) opacity(.65); }

.work { height: 577px; flex: none; display: flex; border-top: 1px solid #b4b4b4; }
.sidebar { width: 53px; border-right: 1px solid #b4b4b4; padding-top: 6px; display: flex; flex-direction: column; height: 576px; }
.hgrip {
  flex: none; height: 6px; width: 43px; margin-left: 5px;
  background:
    radial-gradient(circle at 1px 1px, #c6c6c6 1px, transparent 1.300px) 0 0 / 6px 6px,
    radial-gradient(circle at 4px 4px, #c6c6c6 1px, transparent 1.300px) 0 0 / 6px 6px,
    radial-gradient(circle at 2px 2px, #fff 1px, transparent 1.300px) 0 0 / 6px 6px;
}
.hgrip.second { margin-top: 9px; }
.hgrip.second + .tool { margin-top: -1px; }
.tool { height: 34px; flex: none; display: flex; align-items: center; margin-left: 3px; }
.hgrip:first-child + .tool { margin-top: -2px; }
.tool.shifted { margin-left: 9px; }
.tool .dd { width: 9px; }
.v { width: 35px; height: 34px; }

.dock { position: relative; width: 579px; flex: none; display: flex; flex-direction: column; }
.docktitle { height: 30px; flex: none; display: flex; align-items: flex-start; font-size: 10.500px; }
.docktitle span { width: 82px; padding-left: 2px; margin: 0 -3px; text-align: center; line-height: 21px; font-size: 10px; letter-spacing: .35px; }
.docktitle .hgrip { margin-top: 6px; margin-left: 4px; }
.docktitle .wide1 { width: 229px; }
.docktitle .wide2 { width: 234px; }
.dockbtns { width: 29px; height: 15px; margin: 1px 0 0 1px; }
.tabs { height: 20px; flex: none; padding-left: 10px; display: flex; align-items: flex-end; }
.tab { height: 18px; line-height: 18px; text-align: center; background: linear-gradient(#fafafa, #dedede); border: 1px solid #b2b2b2; border-left: 0; border-bottom: 0; letter-spacing: .25px; }
.tab.map-t { width: 47px; border-left: 1px solid #b2b2b2; border-radius: 3px 0 0 0; letter-spacing: 0; }
.tab.active { width: 92px; height: 21px; line-height: 21px; background: #efefef; border-left: 1px solid #b2b2b2; border-radius: 3px 3px 0 0; margin-bottom: -1px; letter-spacing: 0; z-index: 1; }
.tab.acc-t { width: 73px; }
.tab.about-t { width: 58px; border-radius: 0 3px 0 0; }
.page { margin-left: 9px; width: 560px; height: 495px; flex: none; border: 1px solid #b4b4b4; border-bottom: 2px solid #b8b8b8; border-radius: 2px; padding: 9px 10px 0; display: flex; flex-direction: column; }
.dbrow { display: flex; justify-content: space-between; align-items: center; height: 20px; }
.dbrow > span { padding-top: 1px; }
.combo { display: flex; background: #fff; border: 1px solid #a9a9a9; border-radius: 3px; overflow: hidden; }
.combo span { flex: 1; padding-left: 3px; }
.combo b { width: 16px; background: linear-gradient(#fdfdfd, #dcdcdc); border-left: 1px solid #b0b0b0; display: flex; align-items: center; justify-content: center; }
.combo .dd::after { border-width: 4.500px; border-bottom: 0; }
.combo.db { width: 267px; height: 20px; line-height: 20px; margin-right: -1px; }
.storage { margin: 7px 0 3px; height: 16px; letter-spacing: .2px; }
.tableframe { width: 538px; height: 360px; flex: none; background: #fff; border: 2px solid #b8b8b8; border-right-width: 1px; border-bottom-width: 1px; border-radius: 3px; }
table { border-collapse: collapse; table-layout: fixed; width: 535px; margin: -1px 0 0 -1px; }
.c1 { width: 100px; }
.c3 { width: 126px; }
.c5 { width: 108px; }
th { height: 25px; padding: 0; font-weight: normal; background: linear-gradient(#fdfdfd, #e2e2e2); border: 1px solid #8c8c8c; }
td { height: 30px; padding: 0 0 0 3px; border: 1px solid #949494; overflow: hidden; letter-spacing: .05px; }
td.tight { letter-spacing: -.12px; }
td.loose { letter-spacing: .3px; }
.btn { font: inherit; letter-spacing: inherit; color: inherit; height: 25px; padding: 0; border: 1px solid #b2b2b2; border-radius: 3px; background: linear-gradient(#fafafa, #dcdcdc); flex: none; }
.refresh { width: 85px; align-self: flex-end; margin: 9px 0; letter-spacing: -.15px; }
.upload { width: 538px; }
.btabs { height: 31px; flex: none; display: flex; padding: 9px 0 0 1px; align-items: flex-start; }
.bt { height: 18px; line-height: 17px; margin-top: 2px; text-align: center; background: linear-gradient(#f0f0f0, #fff); border: 1px solid #b2b2b2; border-right: 0; }
.one-t { width: 92px; border-radius: 0 0 0 3px; }
.two-t { width: 103px; letter-spacing: .1px; }
.cur { width: 87px; height: 21px; line-height: 21px; margin-top: 1px; background: #efefef; border: 1px solid #b2b2b2; border-top: 0; border-radius: 0 0 3px 3px; }
.rule { flex: 1; height: 1px; background: #b2b2b2; margin-top: 1px; }
.mark { position: absolute; border: 5px solid #e81c24; pointer-events: none; }
.mark-db { left: 278px; top: 51px; width: 289px; height: 39px; }
.mark-up { left: 8px; top: 493px; width: 563px; height: 60px; }
.splitter { width: 5px; padding-top: 190px; }
.vgrip { display: block; width: 3px; height: 190px; background: radial-gradient(circle at 1px 1px, #c6c6c6 1px, transparent 1.300px) 0 0 / 3px 6px; }
.canvas { width: 729px; height: 576px; background: #fff; border: 2px solid #b8b8b8; border-top-width: 1px; border-right: 0; border-radius: 3px 0 0 3px; }
.plan { width: 727px; height: 572px; margin-top: 1px; }
.plan .teal { fill: #66c2a5; stroke: #111; stroke-width: 1.200; }
.plan .s3 { stroke: #111; stroke-width: 3.500; }
.core { fill: none; filter: url(#outline); }
.redf { fill: #c93c4f; }
.red { stroke: #d2404f; }
.ora { stroke: #f4744a; }
.purple { fill: #5e4fa2; }
.white { fill: #fff; }
.blue { fill: #3288bd; }
.orange { fill: #fdae61; }
.orangec { stroke: #fdae61; }
.cream { stroke: #fbe0a0; }
.cream2 { fill: #fbdf94; }
.pale { stroke: #ffffbf; }
.green { stroke: #abdda4; }
.greenf { fill: #abdda4; }
.yg { stroke: #e6f598; }
.tealc { stroke: #66c2a5; }
.mar { stroke: #9e0142; }
.marf { fill: #9e0142; }
.lime { fill: #a6d854; }
.w2 { stroke-width: 2; }
.w7 { stroke-width: 6; }
.w8 { stroke-width: 8; }
.w10 { stroke-width: 11; }
.w11 { stroke-width: 12; }
.w13 { stroke-width: 13; }
.w17 { stroke-width: 18; }

.status { height: 34px; flex: none; border-bottom: 3px solid #0b0b0f; display: flex; align-items: center; padding-left: 6px; }
.msg { width: 435px; letter-spacing: .02px; }
.coord { width: 62px; }
.field { height: 21px; background: #fff; border: 1px solid #a9a9a9; border-radius: 3px; display: flex; line-height: 20px; overflow: hidden; }
.xy { width: 127px; justify-content: flex-end; padding: 0 4px 0 1px; letter-spacing: .25px; }
.xy span { width: 121px; display: flex; justify-content: flex-end; overflow: hidden; }
.mouse { width: 18px; height: 18px; margin: 0 13px 0 4px; }
.scale-l { width: 32px; letter-spacing: -.1px; margin-left: 1px; margin-right: -1px; }
.combo.scale { width: 97px; height: 20px; line-height: 19px; letter-spacing: .4px; }
.lock { width: 16px; height: 18px; margin: 0 14px 0 6px; }
.mag-l { width: 51px; letter-spacing: -.2px; }
.spin { width: 81px; }
.spin span { flex: 1; padding-left: 3px; letter-spacing: .2px; }
.spin b { width: 16px; border-left: 1px solid #b0b0b0; display: flex; flex-direction: column; align-items: center; justify-content: space-evenly; background: linear-gradient(#fff 48%, #bbb 48%, #bbb 52%, #eee 52%); }
.up { border: 4px solid transparent; border-bottom-color: #000; border-top: 0; }
.down { border: 4px solid transparent; border-top-color: #000; border-bottom: 0; }
.rot-l { width: 55px; margin-left: 9px; }
.check { width: 13px; height: 13px; margin: 0 6px; }
.render { width: 56px; }
.globe { width: 18px; height: 18px; margin: 0 3px 0 1px; }
.crs { width: 122px; letter-spacing: .3px; }
.bubble { width: 18px; height: 18px; }
```
